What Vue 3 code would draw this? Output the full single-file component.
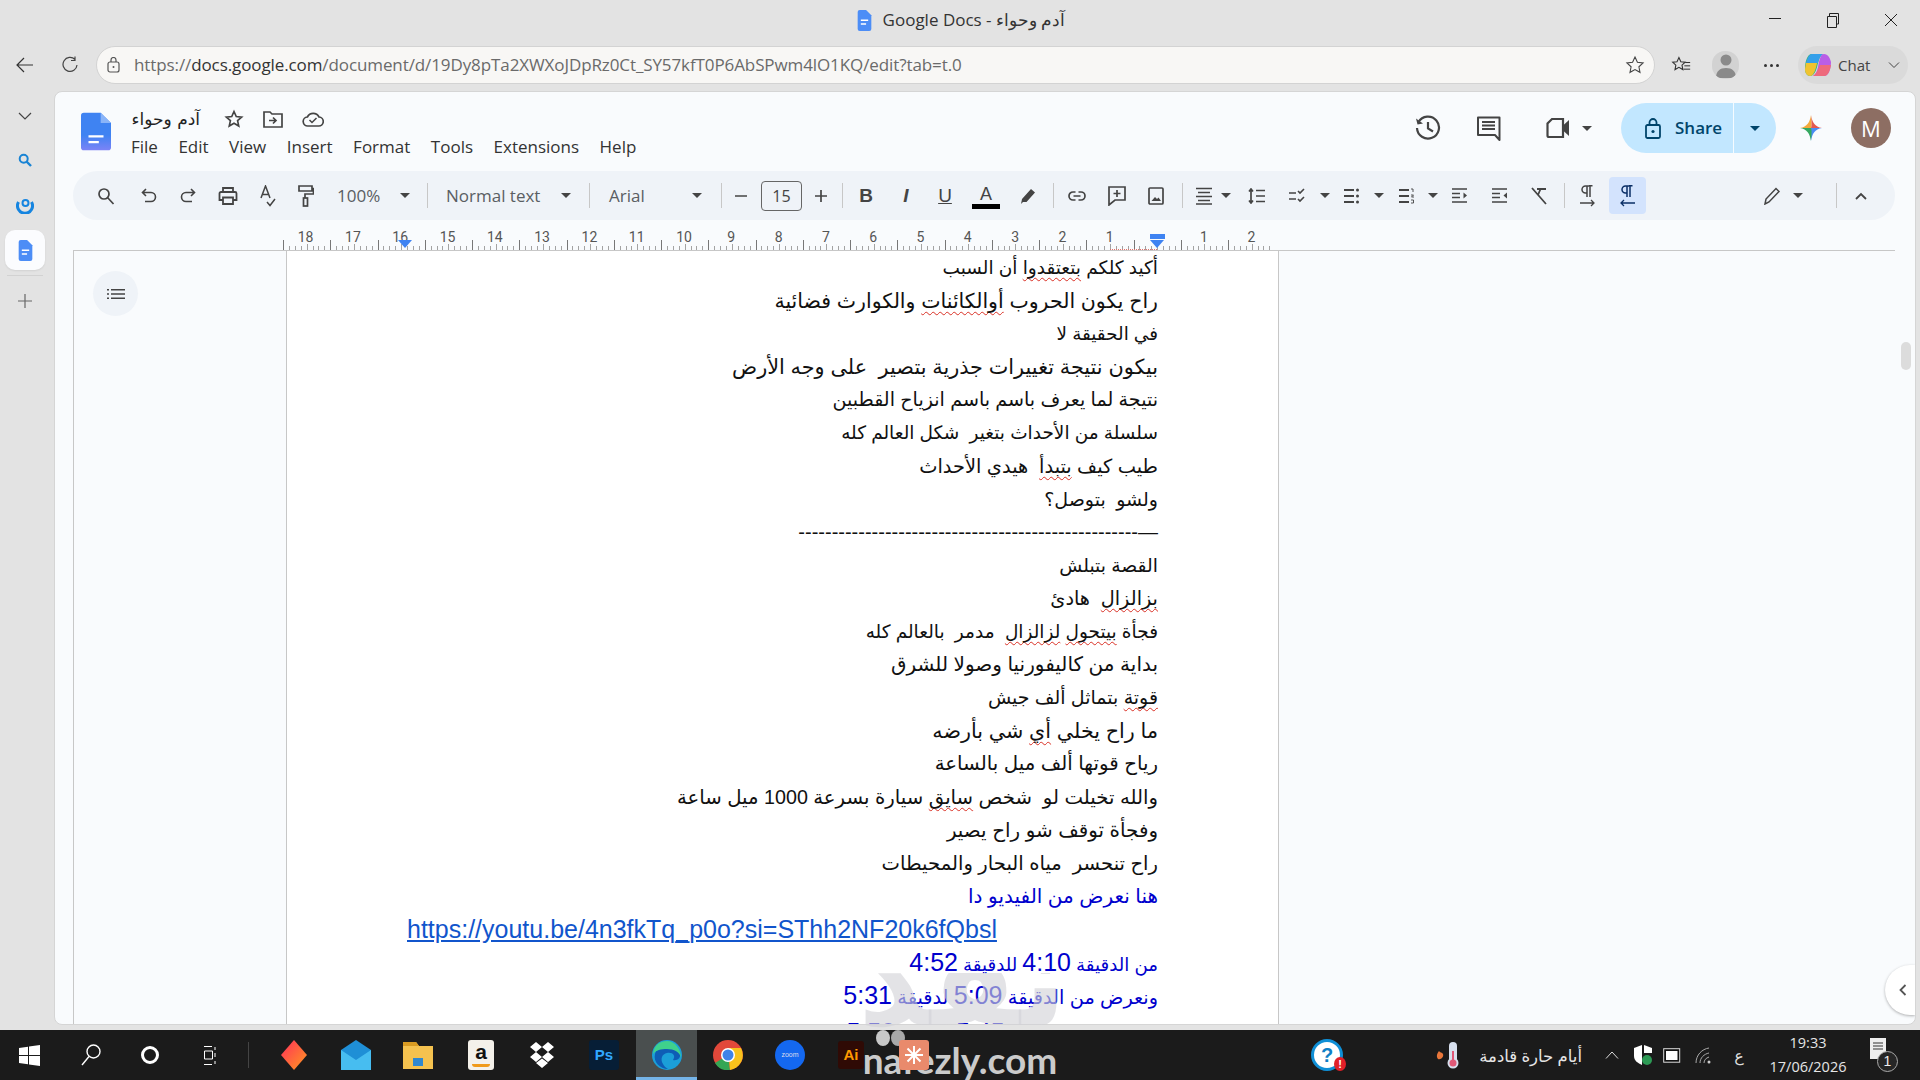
<script setup>
const menus = ['File','Edit','View','Insert','Format','Tools','Extensions','Help']
const zero = 1084
const rulerNums = [18,17,16,15,14,13,12,11,10,9,8,7,6,5,4,3,2,1]
  .map(n => ({ n, x: zero - 47.3 * n }))
  .concat([{ n: 1, x: zero + 47 }, { n: 2, x: zero + 94.500 }])
const ticks = Array.from({ length: 168 }, (_, i) => i)
const lines = [
  { s: 18.5, p: ['أكيد كلكم ', 'بتعتقدوا', ' أن السبب'] },
  { s: 20.5, p: ['راح يكون الحروب ', 'أوالكائنات', ' والكوارث فضائية'] },
  { s: 18.4, p: ['في الحقيقة لا'] },
  { s: 20.8, p: ['بيكون نتيجة تغييرات جذرية بتصير  على وجه الأرض'] },
  { s: 19.1, p: ['نتيجة لما يعرف باسم باسم انزياح القطبين'] },
  { s: 18.5, p: ['سلسلة من الأحداث بتغير  شكل العالم كله'] },
  { s: 19.4, p: ['طيب كيف ', 'بتبدأ', '  هيدي الأحداث'] },
  { s: 19, p: ['ولشو  بتوصل؟'] },
  { s: 20, p: ['—' + '-'.repeat(51)] },
  { s: 18.8, p: ['القصة بتبلش'] },
  { s: 19.3, p: ['', 'بزالزال', '  هادئ'] },
  { s: 18.5, p: ['فجأة ', 'بيتحول', ' ', 'لزالزال', '  مدمر  بالعالم كله'] },
  { s: 20, p: ['بداية من كاليفورنيا وصولا للشرق'] },
  { s: 19, p: ['', 'قوتة', ' بتماثل ألف جيش'] },
  { s: 20.7, p: ['ما راح يخلي ', 'أي', ' شي بأرضه'] },
  { s: 19.8, p: ['رياح قوتها ألف ميل بالساعة'] },
  { s: 19.7, p: ['والله تخيلت لو  شخص ', 'سايق', ' سيارة بسرعة 1000 ميل ساعة'] },
  { s: 19.9, p: ['وفجأة توقف شو راح يصير'] },
  { s: 19.6, p: ['راح تنحسر  مياه البحار والمحيطات'] },
]
</script>

<template>
  <div class="screen">
    <header class="titlebar">
      <div class="wintitle">
        <svg width="15" height="21" viewBox="0 0 13 20"><path d="M2 0h6l5 5v13a2 2 0 0 1-2 2H2a2 2 0 0 1-2-2V2a2 2 0 0 1 2-2z" fill="#4c8df6"/><path d="M3 9h7v1.500H3zM3 12.500h5V14H3z" fill="#fff"/></svg>
        <span>Google Docs - آدم وحواء</span>
      </div>
      <div class="winbtns">
        <svg width="14" height="14" viewBox="0 0 14 14"><path d="M1 5.500h12" stroke="#222" fill="none"/></svg>
        <svg width="14" height="16" viewBox="0 0 14 16"><path d="M1.500 4.500h9v11h-9zM3.500 4.500V1.500h9v10.500h-2" stroke="#222" fill="none"/></svg>
        <svg width="14" height="14" viewBox="0 0 14 14"><path d="M1 1l12 12M13 1L1 13" stroke="#222" fill="none"/></svg>
      </div>
    </header>

    <nav class="browserbar">
      <svg class="nav1" width="18" height="16" viewBox="0 0 18 16"><path d="M8 1L1 8l7 7M1 8h16" stroke="#333" stroke-width="1.200" fill="none"/></svg>
      <svg class="nav2" width="16" height="18" viewBox="0 0 16 18"><path d="M13 3.500A7 7 0 1 0 15 9M13 0.500v4h-4" stroke="#444" stroke-width="1.200" fill="none"/></svg>
      <div class="address">
        <svg width="13" height="16" viewBox="0 0 13 16"><rect x="1" y="5" width="11" height="10" rx="2" stroke="#555" stroke-width="1.200" fill="none"/><path d="M4 5V3a2.500 2.500 0 0 1 5 0v2" stroke="#555" stroke-width="1.200" fill="none"/><circle cx="6.500" cy="10" r="1" fill="#555"/></svg>
        <span class="url"><i>https://</i>docs.google.com<i>/document/d/19Dy8pTa2XWXoJDpRz0Ct_SY57kfT0P6AbSPwm4lO1KQ/edit?tab=t.0</i></span>
        <svg class="urlstar" width="20" height="20" viewBox="0 0 24 24"><path d="M12 2.500l2.900 6.200 6.800.8-5 4.600 1.300 6.700-6-3.400-6 3.400 1.300-6.700-5-4.600 6.800-.8z" stroke="#444" stroke-width="1.300" fill="none"/></svg>
      </div>
      <svg class="favs" width="20" height="20" viewBox="0 0 24 24"><path d="M9.500 3l2.300 5 5.200.6-3.800 3.600 1 5.300-4.700-2.700-4.700 2.700 1-5.300L2 8.600 7.200 8z" stroke="#333" stroke-width="1.300" fill="none"/><path d="M17 9h6M16 13h7M15 17h8" stroke="#333" stroke-width="1.200"/></svg>
      <div class="profile"><svg width="22" height="28" viewBox="0 0 22 28"><circle cx="11" cy="9" r="5.500" fill="#8a8a8a"/><path d="M1 27c0-7 4-10 10-10s10 3 10 10z" fill="#8a8a8a"/></svg></div>
      <div class="dots"><b></b><b></b><b></b></div>
      <div class="chat">
        <svg width="28" height="28" viewBox="0 0 28 28"><path d="M8 3h11c-3 2-4 5-5 9-1 5-3 13-8 13-3 0-5-3-5-7C1 11 3 3 8 3z" fill="#36b37e"/><path d="M8 3h11c-3 2-4 5-5 9H2C3 8 5 3 8 3z" fill="#35a0ea"/><path d="M2 12h11c-1 5-3 13-7 13-3 0-5-3-5-7z" fill="#f0c330"/><path d="M20 3c4 0 6 4 7 8 0 6-2 14-7 14H9c3-2 4-5 5-9 1-5 2-13 6-13z" fill="#b95ee6"/><path d="M16 14h11c-1 6-3 11-7 11H9c3-2 5-6 7-11z" fill="#ee6a7c"/></svg>
        <span>Chat</span>
        <svg width="12" height="8" viewBox="0 0 12 8"><path d="M1 1.500l5 5 5-5" stroke="#444" fill="none"/></svg>
      </div>
    </nav>

    <div class="middle">
      <aside class="rail">
        <svg class="r1" width="14" height="9" viewBox="0 0 14 9"><path d="M1 1l6 6 6-6" stroke="#444" stroke-width="1.200" fill="none"/></svg>
        <svg class="r2" width="14" height="14" viewBox="0 0 14 14"><circle cx="5.700" cy="5.700" r="4" stroke="#1a84d4" stroke-width="2" fill="none"/><path d="M8.500 8.500l4.500 4.500" stroke="#1a84d4" stroke-width="2.400"/></svg>
        <svg class="r3" width="18" height="19" viewBox="0 0 18 19"><path d="M2.500 7a7.500 7.500 0 1 0 13 0" stroke="#1685e0" stroke-width="3" fill="none"/><circle cx="9.500" cy="8" r="3" stroke="#1685e0" stroke-width="2" fill="none"/></svg>
        <div class="railtile"><svg width="15" height="21" viewBox="0 0 13 20"><path d="M2 0h6l5 5v13a2 2 0 0 1-2 2H2a2 2 0 0 1-2-2V2a2 2 0 0 1 2-2z" fill="#4c8df6"/><path d="M3 9h7v1.500H3zM3 12.500h5V14H3z" fill="#fff"/></svg></div>
        <i class="railsep"></i>
        <svg class="r4" width="16" height="16" viewBox="0 0 16 16"><path d="M8 1v14M1 8h14" stroke="#666" stroke-width="1.200"/></svg>
      </aside>

      <main class="panel">
        <section class="docshead">
          <svg class="doclogo" width="30" height="39" viewBox="0 0 32 40">
            <defs><linearGradient id="dg" x1="0" y1="0" x2="0" y2="1"><stop offset="0.600" stop-color="#3f83f2"/><stop offset="1" stop-color="#7c83f6"/></linearGradient></defs>
            <path d="M3 0h18l11 11v26a3 3 0 0 1-3 3H3a3 3 0 0 1-3-3V3a3 3 0 0 1 3-3z" fill="url(#dg)"/>
            <path d="M21 0l11 11H21z" fill="#8ab4f8"/>
            <path d="M8 24h16v2.500H8zM8 30h11v2.500H8z" fill="#fff"/>
          </svg>
          <div class="docmeta">
            <div class="titlerow">
              <span class="doctitle">آدم وحواء</span>
              <svg class="hstar" width="20" height="20" viewBox="0 0 24 24"><path d="M12 3l2.700 6 6.500.7-4.900 4.300 1.400 6.400L12 17.100l-5.700 3.300 1.400-6.400L2.800 9.700 9.300 9z" stroke="#444" stroke-width="2" fill="none"/></svg>
              <svg class="hfold" width="20" height="18" viewBox="0 0 20 18"><path d="M1 2h6l2 2h10v13H1z" stroke="#444" stroke-width="1.700" fill="none"/><path d="M6 10.500h7M10 7.500l3 3-3 3" stroke="#444" stroke-width="1.700" fill="none"/></svg>
              <svg class="hfold" width="22" height="18" viewBox="0 0 22 18"><path d="M6 16a4.500 4.500 0 0 1-.6-9A6.500 6.500 0 0 1 17 7a4.500 4.500 0 0 1-.5 9z" stroke="#444" stroke-width="1.700" fill="none"/><path d="M7.500 10l2.500 2.500 4.500-4.500" stroke="#444" stroke-width="1.500" fill="none"/></svg>
            </div>
            <div class="menus"><span v-for="m in menus" :key="m">{{ m }}</span></div>
          </div>
          <div class="headright">
            <svg width="26" height="26" viewBox="0 0 26 26"><path d="M3.500 7A11 11 0 1 1 2 13" stroke="#444" stroke-width="2.200" fill="none"/><path d="M1 3.500l1.500 6 5.500-1z" fill="#444"/><path d="M13 7v6.500l5 3" stroke="#444" stroke-width="2.200" fill="none"/></svg>
            <svg class="h2" width="24" height="26" viewBox="0 0 24 26"><path d="M1 2.500h21.500V25L18 20H1z" stroke="#444" stroke-width="2" fill="none" stroke-linejoin="round"/><path d="M5 7h13M5 10.500h13M5 14h13" stroke="#444" stroke-width="2"/></svg>
            <svg class="h3" width="24" height="22" viewBox="0 0 24 22"><path d="M6 2h11v18H3a1.500 1.500 0 0 1-1.500-1.500V6.500z" stroke="#444" stroke-width="2.200" fill="none"/><path d="M17 8.500l6-5.500v16l-6-5.500z" fill="#444"/></svg>
            <span class="caret h3c"></span>
            <div class="share">
              <div class="sharemain">
                <svg width="16" height="21" viewBox="0 0 16 21"><rect x="1" y="7" width="14" height="13" rx="1.500" stroke="#00456b" stroke-width="1.800" fill="none"/><path d="M4.500 7V4.500a3.500 3.500 0 0 1 7 0V7" stroke="#00456b" stroke-width="1.800" fill="none"/><circle cx="8" cy="13.500" r="1.600" fill="#00456b"/></svg>
                <span class="sharelabel">Share</span>
              </div>
              <div class="sharecaret"><span class="caret dark"></span></div>
            </div>
            <svg class="gem" width="24" height="26" viewBox="0 0 22 26">
              <path d="M11 0c.6 6 1 11 0 13H0C7 12 10 7 11 0z" fill="#f3a93c"/>
              <path d="M11 0c1 7 4 12 11 13H11c1-2 .6-7 0-13z" fill="#e4574f"/>
              <path d="M22 13c-7 1-10 6-11 13-.6-6-1-11 0-13z" fill="#4a8cf3"/>
              <path d="M0 13c7 1 10 6 11 13 .6-6 1-11 0-13z" fill="#35a860"/>
            </svg>
            <div class="avatar">M</div>
          </div>
        </section>

        <section class="toolbarwrap">
          <div class="toolbar">
            <svg class="t m24" width="18" height="18" viewBox="0 0 18 18"><circle cx="7" cy="7" r="5" stroke="#444" stroke-width="1.700" fill="none"/><path d="M10.500 10.500l6 6.500" stroke="#444" stroke-width="1.700"/></svg>
            <svg class="t m26" width="16" height="16" viewBox="0 0 16 16"><path d="M5 1L1.500 4.500 5 8M1.500 4.500H10a4.500 4.500 0 0 1 0 9H4" stroke="#444" stroke-width="1.600" fill="none"/></svg>
            <svg class="t m23" width="16" height="16" viewBox="0 0 16 16"><path d="M11 1l3.500 3.500L11 8M14.500 4.500H6a4.500 4.500 0 0 0 0 9h6" stroke="#444" stroke-width="1.600" fill="none"/></svg>
            <svg class="t m22" width="20" height="18" viewBox="0 0 20 18"><path d="M5 5V1h10v4M5 13H1.500V6.500a1.500 1.500 0 0 1 1.500-1.500h14a1.500 1.500 0 0 1 1.500 1.500V13H15M5 10.500h10V17H5z" stroke="#444" stroke-width="1.800" fill="none"/></svg>
            <svg class="t m22" width="16" height="22" viewBox="0 0 16 22"><path d="M1 13L5.500 1 10 13M2.500 9.500h6M7 17l3 3.500 5-6.500" stroke="#444" stroke-width="1.500" fill="none"/></svg>
            <svg class="t m22" width="16" height="22" viewBox="0 0 16 22"><path d="M1 1h13v5H1zM14 3.500h1.500V9H7v4" stroke="#444" stroke-width="1.700" fill="none"/><rect x="5.500" y="13" width="4" height="8" stroke="#444" stroke-width="1.700" fill="none"/></svg>
            <span class="tt w46 m23">100%</span>
            <span class="caret m17"></span>
            <i class="sep m17"></i>
            <span class="tt w95 m18">Normal text</span>
            <span class="caret m20"></span>
            <i class="sep m18"></i>
            <span class="tt w37 m19">Arial</span>
            <span class="caret m46"></span>
            <i class="sep m19"></i>
            <svg class="t m12" width="14" height="14" viewBox="0 0 14 14"><path d="M1 7h12" stroke="#444" stroke-width="1.700"/></svg>
            <div class="sizebox m13">15</div>
            <svg class="t m12" width="14" height="14" viewBox="0 0 14 14"><path d="M1 7h12M7 1v12" stroke="#444" stroke-width="1.700"/></svg>
            <i class="sep m14"></i>
            <span class="fmt b m13">B</span>
            <span class="fmt it m20">I</span>
            <span class="fmt u m19">U</span>
            <span class="fmt a m17">A</span>
            <svg class="t m19" width="18" height="18" viewBox="0 0 18 18"><path d="M3 12L12 2l4 3.500-8.500 9.500H4l-2 2z" fill="#444"/></svg>
            <i class="sep m16"></i>
            <svg class="t m14" width="18" height="10" viewBox="0 0 18 10"><path d="M7.500 1H5a4 4 0 0 0 0 8h2.500M10.500 1H13a4 4 0 0 1 0 8h-2.500M5.500 5h7" stroke="#444" stroke-width="1.700" fill="none"/></svg>
            <svg class="t m22" width="18" height="20" viewBox="0 0 18 20"><path d="M1 1h16v13H7l-6 5zM9 4v7M5.500 7.500h7" stroke="#444" stroke-width="1.700" fill="none"/></svg>
            <svg class="t m22" width="16" height="18" viewBox="0 0 16 18"><rect x="1" y="1" width="14" height="16" rx="1" stroke="#444" stroke-width="1.700" fill="none"/><path d="M3.500 14l3.500-4 2 2 1.500-1.500 2.500 3.500z" fill="#444"/></svg>
            <i class="sep m18"></i>
            <svg class="t m13" width="16" height="18" viewBox="0 0 16 18"><path d="M0 1.500h16M2 5.500h12M0 9.500h16M2 13.500h12M0 17h16" stroke="#444" stroke-width="1.600"/></svg>
            <span class="caret m9"></span>
            <svg class="t m17" width="18" height="16" viewBox="0 0 18 16"><path d="M3 1v14M1 3.500L3 1l2 2.500M1 12.500L3 15l2-2.500M8 2.500h9M8 8h9M8 13.500h9" stroke="#444" stroke-width="1.700" fill="none"/></svg>
            <svg class="t m23" width="18" height="16" viewBox="0 0 18 16"><path d="M0 5h7M0 11h7M9 3l2 2 4-4M9 11l2 2 4-4" stroke="#444" stroke-width="1.600" fill="none"/></svg>
            <span class="caret m13"></span>
            <svg class="t m14" width="15" height="16" viewBox="0 0 15 16"><path d="M0 2h10M0 8h10M0 14h10" stroke="#444" stroke-width="2"/><circle cx="13.500" cy="2" r="1.500" fill="#444"/><circle cx="13.500" cy="8" r="1.500" fill="#444"/><circle cx="13.500" cy="14" r="1.500" fill="#444"/></svg>
            <span class="caret m15"></span>
            <svg class="t m15" width="15" height="16" viewBox="0 0 15 16"><path d="M0 2h10M0 8h10M0 14h10" stroke="#444" stroke-width="2"/><path d="M12 1h2v3M12 7h2.500l-2 2h2.500M12 12h2.500v3H12" stroke="#444" fill="none" stroke-width=".9"/></svg>
            <span class="caret m14"></span>
            <svg class="t m14" width="16" height="15" viewBox="0 0 16 15"><path d="M0 1h15M0 5.500h8M0 9.500h8M0 14h15" stroke="#444" stroke-width="1.500"/><path d="M11.500 4.500l3.500 3-3.500 3z" fill="#444"/></svg>
            <svg class="t m24" width="16" height="15" viewBox="0 0 16 15"><path d="M0 1h15M0 5.500h8M0 9.500h8M0 14h15" stroke="#444" stroke-width="1.500"/><path d="M15 4.500l-3.500 3 3.500 3z" fill="#444"/></svg>
            <svg class="t m23" width="16" height="18" viewBox="0 0 16 18"><path d="M6 2h9M9.500 2L7 8M1 1l14 16" stroke="#444" stroke-width="1.800" fill="none"/></svg>
            <i class="sep m17"></i>
            <svg class="t m15" width="15" height="22" viewBox="0 0 15 22"><path d="M9 1H5.500a3.500 3.500 0 0 0 0 7H7M7 1v11M10 1v11M9 .8h3.500" stroke="#444" stroke-width="1.500" fill="none"/><path d="M0 18h14M11 15l3 3-3 3" stroke="#444" stroke-width="1.300" fill="none"/></svg>
            <div class="rtlon m14"><svg width="15" height="22" viewBox="0 0 15 22"><path d="M9 1H5.500a3.500 3.500 0 0 0 0 7H7M7 1v11M10 1v11M9 .8h3.500" stroke="#0b2f66" stroke-width="1.500" fill="none"/><path d="M15 18H1M4 15l-3 3 3 3" stroke="#0b2f66" stroke-width="1.300" fill="none"/></svg></div>
            <svg class="t pen" width="16" height="18" viewBox="0 0 16 18"><path d="M1 17l1-5L12 1.500l3 3L5 15z" stroke="#444" stroke-width="1.500" fill="none"/></svg>
            <span class="caret m13"></span>
            <i class="sep m33"></i>
            <svg class="t m18 endchev" width="12" height="8" viewBox="0 0 12 8"><path d="M1 7l5-5 5 5" stroke="#444" stroke-width="1.800" fill="none"/></svg>
          </div>
        </section>

        <section class="rulerrow">
          <div class="rulertrack">
            <div class="rulertick" v-for="i in ticks" :key="i" :class="{ major: i % 8 === 0, mid: i % 4 === 0 && i % 8 !== 0 }"></div>
          </div>
          <span v-for="r in rulerNums" :key="r.x" class="rnum" :style="{ left: r.x + 'px' }">{{ r.n }}</span>
          <span class="tri tri1"></span>
          <span class="tri tri2"></span>
          <span class="indentmain"></span>
          <span class="rulerred"></span>
        </section>

        <section class="docarea">
          <div class="gutterl">
            <div class="outline"><svg width="20" height="12" viewBox="0 0 18 12"><path d="M0 1h2v1.500H0zM0 5.300h2v1.500H0zM0 9.500h2V11H0zM4 1h14v1.500H4zM4 5.300h14v1.500H4zM4 9.500h14V11H4z" fill="#444"/></svg></div>
          </div>
          <article class="page">
            <p v-for="(l, i) in lines" :key="i" class="ln" :style="{ fontSize: l.s + 'px' }"><template v-for="(seg, j) in l.p" :key="j"><span v-if="j % 2" class="sq">{{ seg }}</span><template v-else>{{ seg }}</template></template></p>
            <p class="ln blue sm">هنا نعرض من الفيديو  دا</p>
            <p class="ln lnk"><a>https://youtu.be/4n3fkTq_p0o?si=SThh2NF20k6fQbsl</a></p>
            <p class="ln blue b22">من الدقيقة <b>4:10</b>  للدقيقة <b>4:52</b></p>
            <p class="ln blue b23">ونعرض من الدقيقة <b>5:09</b> لدقيقة <b>5:31</b></p>
            <p class="ln blue last">ونعرض من الدقيقة <b>5:45</b> لدقيقة <b>5:50</b></p>
          </article>
          <div class="gutterr">
            <div class="thumb"></div>
            <div class="collapse"><svg width="8" height="12" viewBox="0 0 8 12"><path d="M6.500 1L1.500 6l5 5" stroke="#555" stroke-width="1.800" fill="none"/></svg></div>
          </div>
        </section>
      </main>
    </div>

    <footer class="taskbar">
      <svg class="tb m19" width="21" height="21" viewBox="0 0 21 21"><path d="M0 3l9-1.300V10H0zM10 1.500L21 0v10H10zM0 11h9v8.300L0 18zM10 11h11v10l-11-1.500z" fill="#fff"/></svg>
      <svg class="tb m41" width="20" height="22" viewBox="0 0 20 22"><circle cx="12.500" cy="7.500" r="6.500" stroke="#fff" stroke-width="1.400" fill="none"/><path d="M8 12.500L1 21" stroke="#fff" stroke-width="1.400"/></svg>
      <span class="cortana m40"></span>
      <svg class="tb m45" width="12" height="19" viewBox="0 0 12 19"><path d="M0 .5h8M0 18.500h8M.5 5h8v8h-8zM11 1v3M11 7v4M11 15v3" stroke="#fff" fill="none"/></svg>
      <i class="tbsep m32"></i>
      <svg class="tb m32" width="26" height="30" viewBox="0 0 26 30"><defs><linearGradient id="rd" x1="0" y1="0" x2="1" y2="1"><stop offset="0" stop-color="#ff2e5b"/><stop offset="1" stop-color="#ff9a1f"/></linearGradient></defs><path d="M13 0l13 15-13 15L0 15z" fill="url(#rd)"/></svg>
      <svg class="tb m33" width="32" height="30" viewBox="0 0 32 30"><path d="M1 10L16 0l15 10v20H1z" fill="#1f8fd6"/><path d="M1 10l15 10 15-10v20H1z" fill="#47bdf0"/></svg>
      <svg class="tb m31" width="30" height="28" viewBox="0 0 30 28"><path d="M0 1h13l3 4h14v23H0z" fill="#f5c24f"/><path d="M0 1h13l3 4H0z" fill="#d99b22"/><path d="M10 17h10v8H10z" fill="#2f88d0"/></svg>
      <div class="amazon m35"><span>a</span><i></i></div>
      <svg class="tb m35" width="26" height="26" viewBox="0 0 26 26"><path d="M7 0l6 5-6 5-6-5zM19 0l6 5-6 5-6-5zM7 10l6 5-6 5-6-5zM19 10l6 5-6 5-6-5zM13 16.500l6 4.500-6 5-6-5z" fill="#fff"/></svg>
      <div class="ps m34">Ps</div>
      <div class="edge m17">
        <svg width="30" height="30" viewBox="0 0 30 30"><circle cx="15" cy="15" r="15" fill="#1b9fd8"/><path d="M3 14C5 4 22 2 28 14c1 4-3 7-7 6 3-4 0-8-6-7-5 1-7 6-4 11 1 2 3 4 5 5C8 29 1 22 3 14z" fill="#0e5db5"/><path d="M15 9c7 0 13 3 14 9 0-9-6-17-14-17S2 6 1 14c3-4 8-5 14-5z" fill="#3fd18c"/></svg>
      </div>
      <svg class="tb m16" width="30" height="30" viewBox="0 0 30 30"><circle cx="15" cy="15" r="15" fill="#e2483a"/><path d="M15 15L2 23A15 15 0 0 0 17 30z" fill="#34a654"/><path d="M15 8h13a15 15 0 0 1-11 22z" fill="#f8c21c"/><circle cx="15" cy="15" r="7" fill="#fff"/><circle cx="15" cy="15" r="5.500" fill="#3f83e8"/></svg>
      <div class="zoomapp m32">zoom</div>
      <div class="ai m33">Ai</div>
      <div class="redapp m35"><svg width="24" height="24" viewBox="0 0 24 24"><path d="M12 3v18M3 12h18M5.500 5.500l13 13M18.500 5.500l-13 13" stroke="#fff" stroke-width="2"/></svg></div>
      <div class="helpq m382">?<b>!</b></div>
      <div class="weather m92">
        <svg width="28" height="28" viewBox="0 0 28 28"><path d="M4 10c-2 3-3 5-1 8 3 1 6-2 5-5-1-2-3-1-4-3z" fill="#e8763a"/><rect x="14" y="1" width="8" height="22" rx="4" fill="#d7e0ee"/><circle cx="18" cy="22" r="5.500" fill="#d7e0ee"/><path d="M17 10h2v12h-2z" fill="#e05877"/><circle cx="18" cy="22" r="3.500" fill="#e05877"/></svg>
        <span>أيام حارة قادمة</span>
      </div>
      <svg class="tb m23" width="14" height="8" viewBox="0 0 14 8"><path d="M1 7.500l6-6.500 6 6.500" stroke="#ddd" fill="none"/></svg>
      <svg class="tb m15" width="18" height="20" viewBox="0 0 18 20"><path d="M8 0L0 3v8c0 5 4 7 8 9z" fill="#fff"/><path d="M10 0l8 3v5h-8z" fill="#fff"/><circle cx="13" cy="15" r="5" fill="#2d9a55"/></svg>
      <svg class="tb m11" width="18" height="15" viewBox="0 0 18 15"><rect x=".7" y=".7" width="16" height="13.500" stroke="#ddd" fill="#111"/><rect x="3" y="3" width="11.500" height="9" fill="#fff"/></svg>
      <svg class="tb m13" width="18" height="18" viewBox="0 0 18 18"><path d="M2 17C2 9 8 3 15 2M6 17c0-5 4-9 9-10M10 17c0-3 2-5 5-6" stroke="#aaa" fill="none"/><circle cx="15" cy="16" r="1.500" fill="#ccc"/></svg>
      <span class="lang m21">ع</span>
      <div class="clock m19"><span>19:33</span><span>17/06/2026</span></div>
      <div class="notif m11">
        <svg width="16" height="21" viewBox="0 0 16 21"><path d="M0 0h16v16l-3 5H0z" fill="#eee"/><path d="M3 5h10M3 8h10M3 11h10" stroke="#333"/></svg>
        <b>1</b>
      </div>
    </footer>

    <div class="wm">
      <div class="wmar">نفذلي</div>
      <i class="wmdot d1"></i><i class="wmdot d2"></i>
      <div class="wmen">nafezly.com</div>
    </div>
  </div>
</template>

<style scoped>
.screen { width: 1920px; height: 1080px; display: flex; flex-direction: column; overflow: hidden; background: #e3e3e3; font-family: "Open Sans", "Noto Sans", sans-serif; position: relative; }
.m9 { margin-left: 9px; } .m11 { margin-left: 11px; } .m12 { margin-left: 12px; } .m13 { margin-left: 13px; } .m14 { margin-left: 14px; }
.m15 { margin-left: 15px; } .m16 { margin-left: 16px; } .m17 { margin-left: 17px; } .m18 { margin-left: 18px; } .m19 { margin-left: 19px; }
.m20 { margin-left: 20px; } .m21 { margin-left: 21px; } .m22 { margin-left: 22px; } .m23 { margin-left: 23px; } .m24 { margin-left: 24px; }
.m26 { margin-left: 26px; } .m31 { margin-left: 31px; } .m32 { margin-left: 32px; } .m33 { margin-left: 33px; } .m34 { margin-left: 34px; }
.m35 { margin-left: 35px; } .m40 { margin-left: 40px; } .m41 { margin-left: 41px; } .m45 { margin-left: 45px; } .m46 { margin-left: 46px; }
.m92 { margin-left: 92px; } .m382 { margin-left: 382px; }
.titlebar { height: 46px; box-sizing: border-box; padding-bottom: 6px; flex: none; display: flex; align-items: center; justify-content: center; position: relative; }
.wintitle { display: flex; align-items: center; gap: 11px; font-size: 17px; color: #333; margin-left: 2px; white-space: nowrap; }
.wintitle span { padding-bottom: 2px; }
.winbtns { position: absolute; right: 22px; top: 12px; display: flex; gap: 44px; align-items: center; }
.browserbar { height: 38px; margin-bottom: 7px; flex: none; display: flex; align-items: center; }
.nav1 { margin-left: 16px; flex: none; }
.nav2 { margin-left: 28px; flex: none; }
.address { margin-left: 18px; flex: none; width: 1559px; height: 38px; box-sizing: border-box; background: #f8f7f5; border: 1px solid #d3d3d3; border-radius: 19px; display: flex; align-items: center; padding: 0 9px 0 10px; }
.url { margin-left: 14px; padding-bottom: 2px; font-size: 17px; color: #333; letter-spacing: -0.1px; white-space: nowrap; }
.url i { font-style: normal; color: #6a6a6a; }
.urlstar { margin-left: auto; }
.favs { margin-left: 16px; flex: none; }
.profile { margin-left: 21px; flex: none; width: 27px; height: 28px; background: #d2d2d2; border-radius: 13px; overflow: hidden; display: flex; justify-content: center; }
.dots { margin-left: 25px; display: flex; gap: 3px; }
.dots b { width: 3px; height: 3px; border-radius: 50%; background: #333; }
.chat { margin-left: 19px; flex: none; width: 110px; height: 38px; border-radius: 19px; background: #dadada; display: flex; align-items: center; padding-left: 6px; box-sizing: border-box; font-size: 15px; color: #444; }
.chat span { margin-left: 6px; }
.chat svg:last-child { margin-left: 18px; }
.middle { flex: 1; display: flex; min-height: 0; }
.rail { width: 54px; box-sizing: border-box; padding-right: 4px; flex: none; display: flex; flex-direction: column; align-items: center; }
.r1 { margin-top: 21px; flex: none; }
.r2 { margin-top: 32px; flex: none; }
.r3 { margin-top: 28px; flex: none; }
.railtile { margin-top: 16px; flex: none; width: 40px; height: 40px; border-radius: 10px; background: #fbfcfe; display: flex; align-items: center; justify-content: center; box-shadow: 0 1px 2px rgba(0,0,0,.08); }
.railsep { flex: none; width: 36px; height: 1px; background: #d2d2d2; margin-top: 5px; }
.r4 { margin-top: 17px; flex: none; }
.panel { flex: none; width: 1862px; height: 934px; box-sizing: border-box; background: #f9fbfd; border: 1px solid #d5d5d5; border-radius: 8px; display: flex; flex-direction: column; overflow: hidden; }
.docshead { height: 79px; flex: none; display: flex; align-items: flex-start; }
.doclogo { margin: 20px 0 0 26px; flex: none; }
.docmeta { margin-left: 20px; padding-top: 15px; }
.titlerow { display: flex; align-items: center; height: 24px; }
.doctitle { font-family: "DejaVu Sans", "Noto Sans", sans-serif; font-size: 17px; color: #222; width: 69px; white-space: nowrap; direction: rtl; }
.hstar { margin-left: 24px; }
.hfold { margin-left: 19px; }
.menus { display: flex; gap: 20.500px; margin-top: 4px; font-size: 17px; line-height: 23px; color: #333; white-space: nowrap; }
.headright { margin-left: auto; display: flex; align-items: center; height: 72px; padding-right: 24px; }
.h2 { margin-left: 36px; flex: none; }
.h3 { margin-left: 45px; flex: none; }
.h3c { margin-left: 12px; }
.caret { flex: none; display: inline-block; width: 0; height: 0; border-left: 5px solid transparent; border-right: 5px solid transparent; border-top: 5px solid #444; }
.caret.dark { border-top-color: #00456b; }
.share { margin-left: 29px; flex: none; width: 155px; height: 50px; border-radius: 25px; background: #c2e7ff; display: flex; overflow: hidden; }
.sharemain { width: 113px; border-right: 1px solid #f5fbff; display: flex; align-items: center; gap: 14px; padding-left: 24px; box-sizing: border-box; font-size: 17px; font-weight: 600; color: #00456b; }
.sharelabel { padding-bottom: 2px; }
.sharecaret { flex: 1; display: flex; align-items: center; justify-content: center; }
.gem { margin-left: 23px; flex: none; }
.avatar { margin-left: 28px; flex: none; width: 40px; height: 40px; border-radius: 50%; background: #8d6e63; color: #fff; display: flex; align-items: center; justify-content: center; font-size: 22px; }
.toolbarwrap { height: 49px; flex: none; padding: 0 20px 0 18px; }
.toolbar { height: 49px; border-radius: 25px; background: #eff3f8; display: flex; align-items: center; color: #444; font-size: 17px; white-space: nowrap; }
.t { flex: none; }
.pen { margin-left: auto; }
.endchev { margin-right: 28px; }
.sep { flex: none; width: 1px; height: 25px; background: #c7c7c7; display: block; }
.tt { color: #5a5e63; flex: none; }
.w46 { width: 46px; } .w95 { width: 95px; } .w37 { width: 37px; }
.sizebox { flex: none; width: 41px; height: 30px; box-sizing: border-box; border: 1px solid #666; border-radius: 4px; display: flex; align-items: center; justify-content: center; font-size: 16px; color: #444; }
.fmt { flex: none; width: 20px; text-align: center; font-family: "Liberation Sans", sans-serif; font-size: 19px; color: #444; }
.b { font-weight: 700; }
.it { font-style: italic; font-weight: 700; }
.u { text-decoration: underline; }
.a { width: 28px; border-bottom: 5px solid #000; line-height: 20px; margin-top: 2px; font-size: 18px; }
.rtlon { flex: none; width: 37px; height: 37px; border-radius: 4px; background: #d3e3fd; display: flex; align-items: center; justify-content: center; }
.rulerrow { height: 30px; flex: none; position: relative; border-bottom: 1px solid #c7c7c7; margin: 0 20px 0 18px; }
.rulertrack { position: absolute; left: 210px; bottom: 0; height: 30px; display: flex; align-items: flex-end; }
.rulertick { flex: none; width: 5.912px; height: 4px; box-sizing: border-box; border-left: 1px solid #a3a3a3; }
.rulertick.mid { height: 6px; }
.rulertick.major { height: 10px; border-left-color: #777; }
.rnum { position: absolute; top: 9px; font-size: 14px; color: #555; transform: translateX(-50%); line-height: 16px; font-family: "Roboto", sans-serif; }
.tri { position: absolute; top: 20px; width: 0; height: 0; border-left: 7.500px solid transparent; border-right: 7.500px solid transparent; border-top: 8px solid #3f83f2; }
.tri1 { left: 324.500px; }
.tri2 { left: 1076.500px; }
.indentmain { position: absolute; left: 1077px; top: 14px; width: 15px; height: 5px; background: #3f83f2; }
.rulerred { position: absolute; left: 1037px; top: 29px; width: 47px; border-top: 1px dotted #e0736b; }
.docarea { flex: 1; min-height: 0; display: flex; }
.gutterl { width: 213px; flex: none; border-left: 1px solid #c7c7c7; margin-left: 18px; box-sizing: border-box; }
.outline { margin: 20px 0 0 19px; width: 45px; height: 45px; border-radius: 50%; background: #eff3f8; display: flex; align-items: center; justify-content: center; }
.page { width: 993px; flex: none; box-sizing: border-box; background: #fff; border: solid #c7c7c7; border-width: 0 1px; padding: 0 120px 0 0; direction: rtl; overflow: hidden; font-family: "Liberation Sans", "DejaVu Sans", sans-serif; color: #111; }
.ln { margin: 0; height: 33.100px; line-height: 33px; font-size: 19px; white-space: pre; text-align: right; }
.sq { text-decoration: underline wavy #d93025 1px; text-decoration-skip-ink: none; text-underline-offset: 3px; }
.blue { color: #0000cd; }
.blue b { font-weight: 400; font-size: 25px; }
.sm { font-size: 20px; }
.b22 { font-size: 18.200px; }
.b23 { font-size: 19.300px; }
.last { padding-top: 4px; }
.ln.lnk { direction: ltr; text-align: left; padding-left: 120px; margin-right: -120px; font-size: 25px; }
.lnk a { color: #1155cc; text-decoration: underline; }
.gutterr { flex: 1; position: relative; }
.thumb { position: absolute; right: 4px; top: 91px; width: 10px; height: 28px; border-radius: 5px; background: #dcdcdc; }
.collapse { position: absolute; right: 0; top: 714px; width: 30px; height: 50px; box-sizing: border-box; padding-left: 6px; border-radius: 25px 0 0 25px; background: #fff; box-shadow: 0 1px 3px rgba(0,0,0,.3); display: flex; align-items: center; justify-content: center; }
.taskbar { height: 50px; flex: none; background: #1b1b1b; display: flex; align-items: center; color: #e6e6e6; }
.tb { flex: none; }
.cortana { flex: none; width: 12px; height: 12px; border: 3px solid #fff; border-radius: 50%; }
.tbsep { flex: none; width: 1px; height: 26px; background: #444; }
.amazon { flex: none; width: 26px; height: 30px; border-radius: 3px; background: #f4f1ea; color: #111; font: 700 21px/24px "Liberation Sans", sans-serif; text-align: center; position: relative; }
.amazon i { position: absolute; left: 4px; bottom: 3px; width: 18px; height: 3px; border-radius: 0 0 8px 8px; background: #f09a1a; }
.ps { flex: none; width: 30px; height: 30px; background: #061e36; color: #31a8ff; font: 700 15px/30px "Liberation Sans", sans-serif; text-align: center; border-radius: 3px; }
.edge { flex: none; width: 61px; height: 50px; box-sizing: border-box; background: #4a4f4f; border-bottom: 3px solid #74b4e8; display: flex; align-items: center; justify-content: center; padding-top: 2px; }
.zoomapp { flex: none; width: 30px; height: 30px; border-radius: 50%; background: #1468f0; color: #dde; font: 7px/30px "Liberation Sans", sans-serif; text-align: center; }
.ai { flex: none; width: 26px; height: 28px; background: #2f0a05; color: #ff9a00; font: 700 15px/28px "Liberation Sans", sans-serif; text-align: center; border-radius: 3px; }
.redapp { flex: none; width: 30px; height: 30px; background: #e98a6c; border-radius: 3px; display: flex; align-items: center; justify-content: center; position: relative; z-index: 3; }
.helpq { flex: none; position: relative; width: 26px; height: 26px; border-radius: 50%; background: #fff; border: 3px solid #0f8fd6; box-sizing: content-box; color: #0f7fc6; font: 700 20px/26px "Liberation Sans", sans-serif; text-align: center; }
.helpq b { position: absolute; right: -6px; bottom: -3px; width: 12px; height: 14px; border-radius: 50%; background: #e12028; color: #fff; font-size: 11px; line-height: 14px; }
.weather { flex: none; display: flex; align-items: center; gap: 13px; font-size: 16.500px; color: #e6e6e6; font-family: "Noto Sans", "DejaVu Sans", sans-serif; white-space: nowrap; }
.weather span { direction: rtl; width: 106px; }
.lang { flex: none; width: 12px; text-align: center; font-size: 16px; color: #ddd; font-family: "DejaVu Sans", sans-serif; }
.clock { flex: none; width: 88px; display: flex; flex-direction: column; align-items: center; gap: 6px; font-size: 14.500px; line-height: 18px; color: #e6e6e6; white-space: nowrap; }
.notif { flex: none; position: relative; width: 24px; height: 34px; }
.notif svg { position: absolute; left: 7px; top: 0; }
.notif b { position: absolute; left: 14px; top: 13px; width: 21px; height: 21px; box-sizing: border-box; border: 1px solid #aaa; border-radius: 50%; background: #262626; color: #eee; font: 400 14px/19px "Liberation Sans", sans-serif; text-align: center; }
.wm { position: absolute; left: 853px; top: 973px; width: 214px; height: 107px; pointer-events: none; text-align: center; z-index: 2; }
.wmar { height: 57px; overflow: hidden; font-family: "DejaVu Sans", sans-serif; font-weight: 700; font-size: 125px; line-height: 18px; color: rgba(210,210,215,.62); direction: rtl; white-space: nowrap; }
.wmdot { position: absolute; top: 57px; width: 14px; height: 16px; border-radius: 50%; background: #c8c8c8; }
.d1 { left: 23px; }
.d2 { left: 38px; background: #a8a8a8; }
.wmen { position: absolute; left: 0; right: 0; top: 65px; font-family: "Lato", "Open Sans", sans-serif; font-weight: 700; font-size: 37px; line-height: 44px; color: #cbcbcb; white-space: nowrap; }
</style>
